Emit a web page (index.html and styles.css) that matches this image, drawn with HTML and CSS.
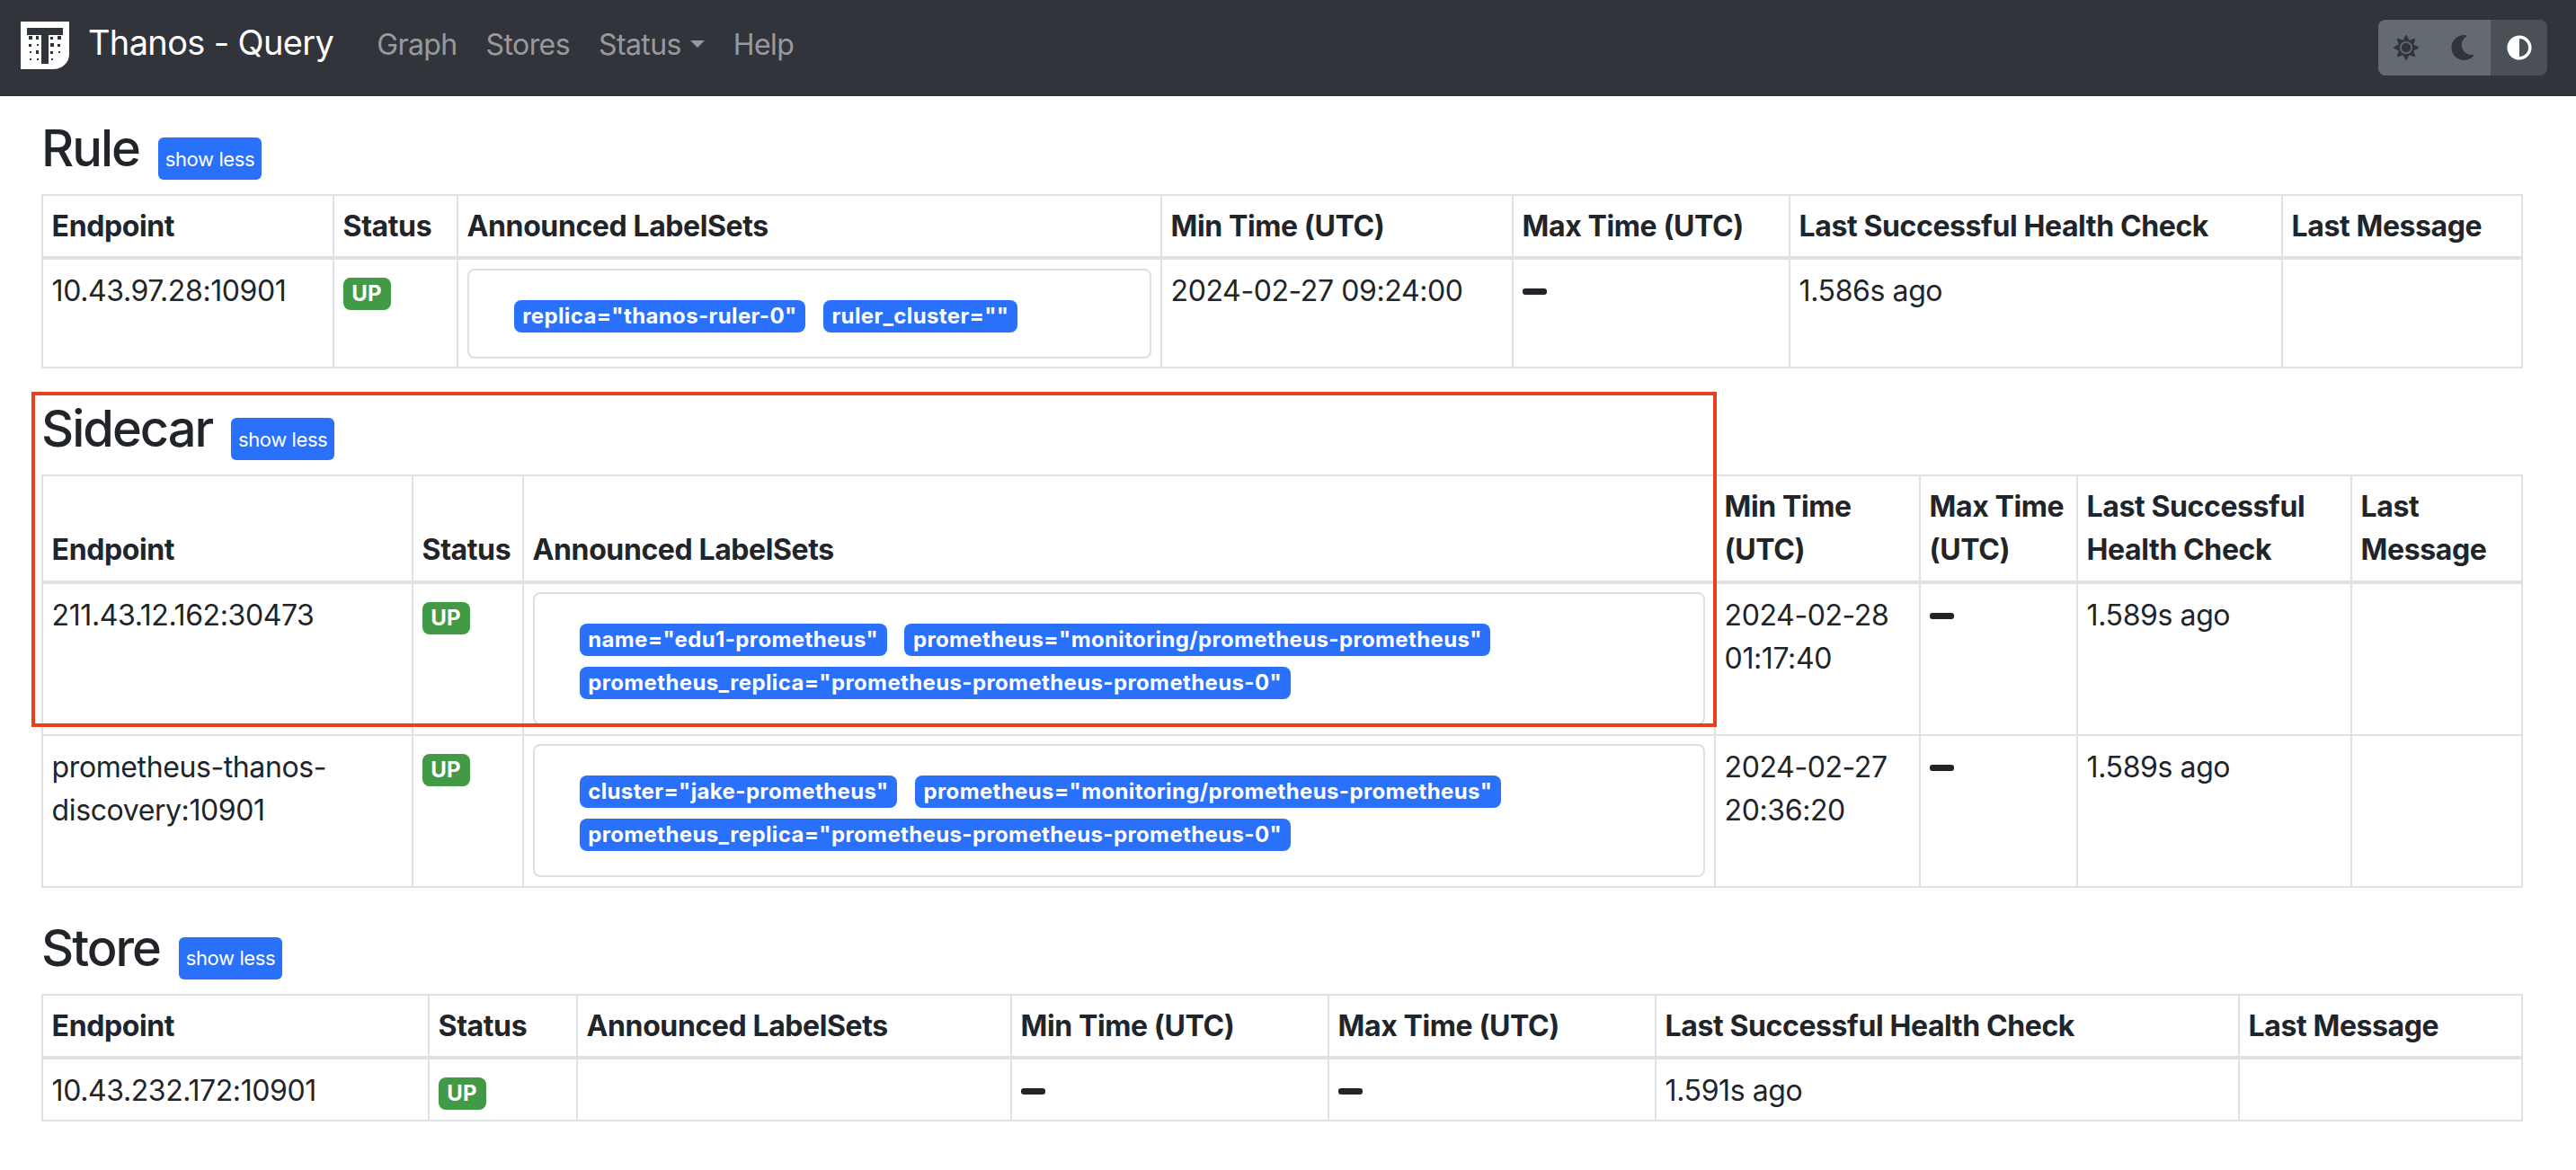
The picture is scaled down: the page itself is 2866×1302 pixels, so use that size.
FILE: index.html
```html
<!DOCTYPE html>
<html lang="en">
<head>
    <meta charset="UTF-8">
    <meta name="viewport" content="width=device-width, initial-scale=1.0">
    <title>Thanos - Query</title>
    <link rel="stylesheet" href="styles.css">
</head>
<body>
    <nav class="navbar">
        <a class="brand" href="#">
            <svg class="logo" viewBox="0 0 54 53">
                <path fill="#fff" d="M0 0H54V36C54 46 46 53 36 53H0Z"/>
                <path fill="#31343a" d="M7 7H47V15H31V47H23V15H7Z"/>
                <g fill="#31343a">
                    <rect x="9" y="16" width="4" height="4"/><rect x="17" y="16" width="3" height="4"/><rect x="33" y="17" width="3" height="3"/><rect x="41" y="16" width="4" height="4"/>
                    <rect x="9" y="25" width="3" height="3"/><rect x="18" y="25" width="2" height="2"/><rect x="33" y="24" width="4" height="4"/><rect x="41" y="25" width="3" height="3"/>
                    <rect x="10" y="33" width="2" height="2"/><rect x="17" y="32" width="3" height="4"/><rect x="33" y="33" width="3" height="3"/><rect x="42" y="33" width="2" height="2"/>
                    <rect x="10" y="41" width="2" height="2"/><rect x="18" y="41" width="2" height="2"/><rect x="34" y="41" width="2" height="2"/>
                </g>
            </svg>
            <span class="brand-name">Thanos - Query</span>
        </a>
        <ul class="nav-links">
            <li><a href="#">Graph</a></li>
            <li><a href="#">Stores</a></li>
            <li><a href="#" class="dropdown">Status</a></li>
            <li><a href="#">Help</a></li>
        </ul>
        <div class="theme-toggle">
            <button type="button" class="theme-btn">
                <svg viewBox="0 0 512 512"><path d="M256 160c-52.9 0-96 43.1-96 96s43.1 96 96 96 96-43.1 96-96-43.1-96-96-96zm246.4 80.5l-94.7-47.3 33.5-100.4c4.5-13.6-8.4-26.5-21.9-21.9l-100.4 33.5-47.4-94.8c-6.4-12.8-24.6-12.8-31 0l-47.3 94.7L92.7 70.8c-13.6-4.5-26.5 8.4-21.9 21.9l33.5 100.4-94.7 47.4c-12.8 6.4-12.8 24.6 0 31l94.7 47.3-33.5 100.5c-4.5 13.6 8.4 26.5 21.9 21.9l100.4-33.5 47.3 94.7c6.4 12.8 24.6 12.8 31 0l47.3-94.7 100.4 33.5c13.6 4.5 26.5-8.4 21.9-21.9l-33.5-100.4 94.7-47.3c13-6.5 13-24.7.2-31.1zm-155.9 106c-49.9 49.9-131.1 49.9-181 0-49.9-49.9-49.9-131.1 0-181 49.9-49.9 131.1-49.9 181 0 49.9 49.9 49.9 131.1 0 181z"/></svg>
            </button>
            <button type="button" class="theme-btn">
                <svg viewBox="0 0 512 512"><path d="M283.211 512c78.962 0 151.079-35.925 198.857-94.792 7.068-8.708-.639-21.43-11.562-19.35-124.203 23.654-238.262-71.576-238.262-196.954 0-72.222 38.662-138.635 101.498-174.394 9.686-5.512 7.25-20.197-3.756-22.23A258.156 258.156 0 0 0 283.211 0c-141.309 0-256 114.511-256 256 0 141.309 114.511 256 256 256z"/></svg>
            </button>
            <button type="button" class="theme-btn active">
                <svg viewBox="0 0 512 512"><path d="M8 256c0 136.966 111.033 248 248 248s248-111.034 248-248S392.966 8 256 8 8 119.033 8 256zm248 184V72c101.705 0 184 82.311 184 184 0 101.705-82.311 184-184 184z"/></svg>
            </button>
        </div>
    </nav>

    <main class="container">
        <section class="store-section section-rule">
            <div class="section-title">
                <h3>Rule</h3>
                <button type="button" class="btn-toggle">show less</button>
            </div>
            <table class="store-table">
                <colgroup><col class="c1"><col class="c2"><col class="c3"><col class="c4"><col class="c5"><col class="c6"><col class="c7"></colgroup>
                <thead>
                    <tr><th>Endpoint</th><th>Status</th><th>Announced LabelSets</th><th>Min Time (UTC)</th><th>Max Time (UTC)</th><th>Last Successful Health Check</th><th>Last Message</th></tr>
                </thead>
                <tbody>
                    <tr>
                        <td>10.43.97.28:10901</td>
                        <td><span class="badge badge-up">UP</span></td>
                        <td>
                            <div class="labelsets">
                                <span class="badge badge-label">replica="thanos-ruler-0"</span>
                                <span class="badge badge-label">ruler_cluster=""</span>
                            </div>
                        </td>
                        <td>2024-02-27 09:24:00</td>
                        <td><span class="dash"></span></td>
                        <td>1.586s ago</td>
                        <td></td>
                    </tr>
                </tbody>
            </table>
        </section>

        <section class="store-section section-sidecar">
            <div class="section-title">
                <h3>Sidecar</h3>
                <button type="button" class="btn-toggle">show less</button>
            </div>
            <table class="store-table">
                <colgroup><col class="c1"><col class="c2"><col class="c3"><col class="c4"><col class="c5"><col class="c6"><col class="c7"></colgroup>
                <thead>
                    <tr><th>Endpoint</th><th>Status</th><th>Announced LabelSets</th><th>Min Time (UTC)</th><th>Max Time (UTC)</th><th>Last Successful Health Check</th><th>Last Message</th></tr>
                </thead>
                <tbody>
                    <tr>
                        <td>211.43.12.162:30473</td>
                        <td><span class="badge badge-up">UP</span></td>
                        <td>
                            <div class="labelsets">
                                <span class="badge badge-label">name="edu1-prometheus"</span>
                                <span class="badge badge-label">prometheus="monitoring/prometheus-prometheus"</span>
                                <span class="badge badge-label">prometheus_replica="prometheus-prometheus-prometheus-0"</span>
                            </div>
                        </td>
                        <td>2024-02-28 01:17:40</td>
                        <td><span class="dash"></span></td>
                        <td>1.589s ago</td>
                        <td></td>
                    </tr>
                    <tr>
                        <td>prometheus-thanos-discovery:10901</td>
                        <td><span class="badge badge-up">UP</span></td>
                        <td>
                            <div class="labelsets">
                                <span class="badge badge-label">cluster="jake-prometheus"</span>
                                <span class="badge badge-label">prometheus="monitoring/prometheus-prometheus"</span>
                                <span class="badge badge-label">prometheus_replica="prometheus-prometheus-prometheus-0"</span>
                            </div>
                        </td>
                        <td>2024-02-27 20:36:20</td>
                        <td><span class="dash"></span></td>
                        <td>1.589s ago</td>
                        <td></td>
                    </tr>
                </tbody>
            </table>
            <div class="highlight-box"></div>
        </section>

        <section class="store-section section-store">
            <div class="section-title">
                <h3>Store</h3>
                <button type="button" class="btn-toggle">show less</button>
            </div>
            <table class="store-table">
                <colgroup><col class="c1"><col class="c2"><col class="c3"><col class="c4"><col class="c5"><col class="c6"><col class="c7"></colgroup>
                <thead>
                    <tr><th>Endpoint</th><th>Status</th><th>Announced LabelSets</th><th>Min Time (UTC)</th><th>Max Time (UTC)</th><th>Last Successful Health Check</th><th>Last Message</th></tr>
                </thead>
                <tbody>
                    <tr>
                        <td>10.43.232.172:10901</td>
                        <td><span class="badge badge-up">UP</span></td>
                        <td></td>
                        <td><span class="dash"></span></td>
                        <td><span class="dash"></span></td>
                        <td>1.591s ago</td>
                        <td></td>
                    </tr>
                </tbody>
            </table>
        </section>
    </main>
</body>
</html>
```

FILE: styles.css
```css
* {
    box-sizing: border-box;
}
body {
    font-family: Inter, "Noto Sans", sans-serif;
    font-size: 32px;
    line-height: 48px;
    letter-spacing: -0.4px;
    color: #212529;
    background-color: #fff;
    margin: 0;
}
a {
    text-decoration: none;
}

/* navbar */
.navbar {
    height: 107px;
    background-color: #31343a;
    display: flex;
    align-items: center;
    padding: 0 32px 0 23px;
}
.brand {
    display: flex;
    align-items: center;
    color: #fff;
    font-size: 38px;
    letter-spacing: -0.66px;
    margin-top: -6px;
}
.brand-name {
    margin-top: -7px;
}
.logo {
    width: 54px;
    height: 53px;
    margin-right: 21px;
}
.nav-links {
    list-style: none;
    display: flex;
    gap: 32px;
    letter-spacing: -0.6px;
    margin: -7px 0 0 48px;
    padding: 0;
}
.nav-links a {
    color: rgba(255, 255, 255, 0.5);
}
.dropdown::after {
    content: "";
    display: inline-block;
    margin-left: 10px;
    vertical-align: 8px;
    border-top: 8px solid;
    border-left: 8.5px solid transparent;
    border-right: 8.5px solid transparent;
}
.theme-toggle {
    display: flex;
    margin-left: auto;
    margin-top: -1px;
    border-radius: 8px;
    overflow: hidden;
}
.theme-btn {
    width: 62.67px;
    height: 62px;
    padding: 0;
    border: none;
    background-color: #636a72;
    display: flex;
    align-items: center;
    justify-content: center;
}
.theme-btn svg {
    width: 28px;
    height: 28px;
    fill: #31343a;
}
.theme-btn.active {
    background-color: #4b5057;
}
.theme-btn.active svg {
    fill: #fff;
}

/* store tables */
.container {
    padding: 0 61px 0 46px;
}
.store-section {
    position: relative;
}
.section-title {
    display: flex;
    align-items: center;
    gap: 21px;
    height: 84px;
}
.section-title h3 {
    font-size: 56px;
    line-height: 67px;
    font-weight: 500;
    letter-spacing: -2px;
    margin: 0 0 17px;
}
.btn-toggle {
    font-family: inherit;
    font-size: 22px;
    line-height: 36px;
    letter-spacing: -0.4px;
    width: 115px;
    height: 47px;
    padding: 0;
    margin-top: 5px;
    color: #fff;
    background-color: #2970fb;
    border: none;
    border-radius: 6px;
}
.store-table {
    width: 100%;
    table-layout: fixed;
    border-collapse: collapse;
}
.store-table th,
.store-table td {
    border: 2px solid #dee2e6;
    padding: 11px 9.6px 8.2px;
    text-align: left;
    vertical-align: top;
}
.store-table th {
    padding: 9.6px;
    font-weight: 700;
    vertical-align: bottom;
    border-bottom-width: 4px;
}
.badge {
    display: inline-block;
    font-size: 24px;
    font-weight: 700;
    line-height: 1;
    letter-spacing: 0.37px;
    padding: 6px 9.6px;
    border-radius: 8px;
    color: #fff;
    white-space: nowrap;
}
.badge-up {
    background-color: #439a46;
}
.badge-label {
    background-color: #2970fb;
    margin-right: 11px;
}
.labelsets {
    border: 2px solid #dfdfdf;
    border-radius: 8px;
    margin: -1.4px 0 1.4px;
    padding: 24px 24px 24px 50px;
}
.dash {
    display: inline-block;
    width: 27px;
    height: 7px;
    border-radius: 3px;
    background-color: #212529;
    vertical-align: 7px;
}
.highlight-box {
    position: absolute;
    left: -11px;
    top: -8px;
    width: 1875px;
    height: 373px;
    border: 4px solid #e8401f;
    pointer-events: none;
}

/* column widths per table */
.section-rule {
    padding-top: 25px;
}
.section-rule .c1 { width: 324px; }
.section-rule .c2 { width: 138px; }
.section-rule .c3 { width: 783px; }
.section-rule .c4 { width: 391px; }
.section-rule .c5 { width: 308px; }
.section-rule .c6 { width: 548px; }
.section-rule .c7 { width: 267px; }

.section-sidecar {
    margin-top: 34px;
}
.section-sidecar .c1 { width: 412px; }
.section-sidecar .c2 { width: 123px; }
.section-sidecar .c3 { width: 1326px; }
.section-sidecar .c4 { width: 228px; }
.section-sidecar .c5 { width: 175px; }
.section-sidecar .c6 { width: 305px; }
.section-sidecar .c7 { width: 190px; }

.section-store {
    margin-top: 34px;
}
.section-store .c1 { width: 430px; }
.section-store .c2 { width: 165px; }
.section-store .c3 { width: 483px; }
.section-store .c4 { width: 353px; }
.section-store .c5 { width: 364px; }
.section-store .c6 { width: 649px; }
.section-store .c7 { width: 315px; }
```
